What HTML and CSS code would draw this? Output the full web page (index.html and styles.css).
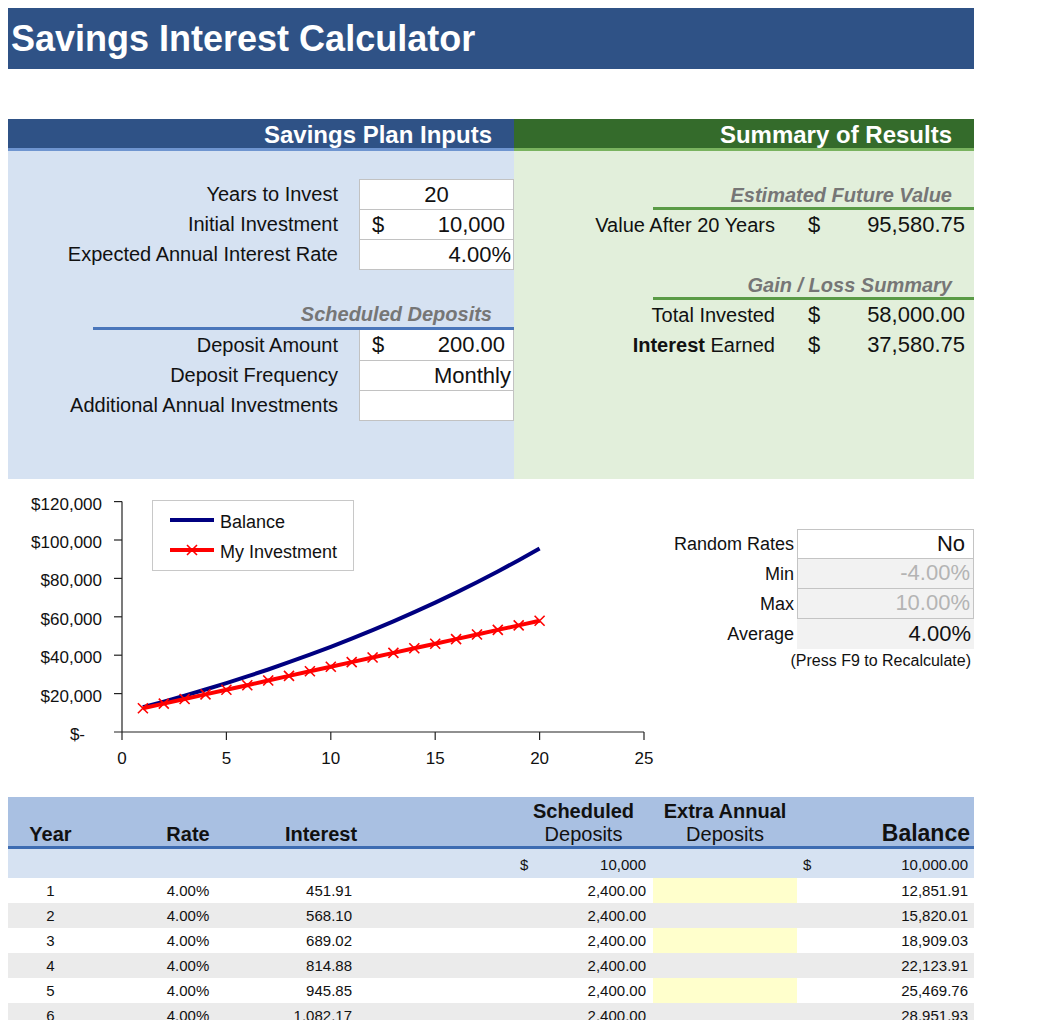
FILE: index.html
```html
<!DOCTYPE html>
<html lang="en">
<head>
  <meta charset="UTF-8" />
  <meta name="viewport" content="width=device-width, initial-scale=1.0" />
  <title>Savings Interest Calculator</title>
  <link rel="stylesheet" href="styles.css">
</head>
<body>
  <div class="page">
    <div class="title-bar">
      <h1>Savings Interest Calculator</h1>
    </div>

    <div class="plan">
      <div class="panel inputs">
        <h2 class="panel-head">Savings Plan Inputs</h2>
        <div class="panel-body">
          <div class="field-group">
            <div class="field-row">
              <span class="label">Years to Invest</span>
              <span class="field center">20</span>
            </div>
            <div class="field-row">
              <span class="label">Initial Investment</span>
              <span class="field money"><span>$</span><span>10,000</span></span>
            </div>
            <div class="field-row">
              <span class="label">Expected Annual Interest Rate</span>
              <span class="field right">4.00%</span>
            </div>
          </div>

          <h3 class="sub-head blue">Scheduled Deposits</h3>
          <div class="field-group">
            <div class="field-row">
              <span class="label">Deposit Amount</span>
              <span class="field money"><span>$</span><span>200.00</span></span>
            </div>
            <div class="field-row">
              <span class="label">Deposit Frequency</span>
              <span class="field right">Monthly</span>
            </div>
            <div class="field-row">
              <span class="label">Additional Annual Investments</span>
              <span class="field"></span>
            </div>
          </div>
        </div>
      </div>

      <div class="panel results">
        <h2 class="panel-head">Summary of Results</h2>
        <div class="panel-body">
          <h3 class="sub-head green">Estimated Future Value</h3>
          <div class="result-row">
            <span class="label">Value After 20 Years</span>
            <span class="amount"><span>$</span><span>95,580.75</span></span>
          </div>

          <h3 class="sub-head green">Gain / Loss Summary</h3>
          <div class="result-row">
            <span class="label">Total Invested</span>
            <span class="amount"><span>$</span><span>58,000.00</span></span>
          </div>
          <div class="result-row">
            <span class="label"><b>Interest</b> Earned</span>
            <span class="amount"><span>$</span><span>37,580.75</span></span>
          </div>
        </div>
      </div>
    </div>

    <div class="chart-area">
      <svg class="chart" width="652" height="300" viewBox="0 0 652 300">
        <defs>
          <marker id="cross" markerUnits="userSpaceOnUse" viewBox="0 0 12 12" refX="6" refY="6" markerWidth="12" markerHeight="12">
            <path d="M1 1 L11 11 M1 11 L11 1" stroke="#ff0000" stroke-width="1.6" fill="none" />
          </marker>
        </defs>

        <!-- axes -->
        <g class="axis">
          <line x1="114" y1="22.6" x2="114" y2="253" />
          <line x1="106" y1="253" x2="636" y2="253" />
          <line x1="106" y1="22.6" x2="114" y2="22.6" />
          <line x1="106" y1="61" x2="114" y2="61" />
          <line x1="106" y1="99.4" x2="114" y2="99.4" />
          <line x1="106" y1="137.8" x2="114" y2="137.8" />
          <line x1="106" y1="176.2" x2="114" y2="176.2" />
          <line x1="106" y1="214.6" x2="114" y2="214.6" />
          <line x1="114" y1="253" x2="114" y2="261" />
          <line x1="218.4" y1="253" x2="218.4" y2="261" />
          <line x1="322.8" y1="253" x2="322.8" y2="261" />
          <line x1="427.2" y1="253" x2="427.2" y2="261" />
          <line x1="531.6" y1="253" x2="531.6" y2="261" />
          <line x1="636" y1="253" x2="636" y2="261" />
        </g>

        <g class="ylabels">
          <text x="94" y="25">$120,000</text>
          <text x="94" y="63.4">$100,000</text>
          <text x="94" y="101.8">$80,000</text>
          <text x="94" y="140.2">$60,000</text>
          <text x="94" y="178.6">$40,000</text>
          <text x="94" y="217">$20,000</text>
          <text x="77" y="255.4">$-</text>
        </g>

        <g class="xlabels">
          <text x="114" y="279">0</text>
          <text x="218.4" y="279">5</text>
          <text x="322.8" y="279">10</text>
          <text x="427.2" y="279">15</text>
          <text x="531.6" y="279">20</text>
          <text x="636" y="279">25</text>
        </g>

        <polyline class="balance-line" points="134.9,228.3 155.8,222.6 176.6,216.7 197.5,210.5 218.4,204.1 239.3,197.4 260.2,190.5 281,183.2 301.9,175.7 322.8,167.8 343.7,159.7 364.6,151.2 385.4,142.3 406.3,133.1 427.2,123.6 448.1,113.6 469,103.2 489.8,92.4 510.7,81.2 531.6,69.5" />
        <polyline class="invest-line" points="134.9,229.2 155.8,224.6 176.6,220 197.5,215.4 218.4,210.8 239.3,206.2 260.2,201.5 281,196.9 301.9,192.3 322.8,187.7 343.7,183.1 364.6,178.5 385.4,173.9 406.3,169.3 427.2,164.7 448.1,160.1 469,155.5 489.8,150.9 510.7,146.4 531.6,141.8" />

        <!-- legend -->
        <rect class="legend-box" x="144.5" y="21.5" width="201" height="70" />
        <line class="balance-line" x1="162" y1="41" x2="206" y2="41" />
        <polyline class="invest-line" points="162,71 184,71 206,71" />
        <text class="legend-text" x="212" y="43">Balance</text>
        <text class="legend-text" x="212" y="73">My Investment</text>
      </svg>

      <div class="random">
        <div class="random-row">
          <span class="label">Random Rates</span>
          <span class="cell white pad">No</span>
        </div>
        <div class="random-row">
          <span class="label">Min</span>
          <span class="cell muted">-4.00%</span>
        </div>
        <div class="random-row">
          <span class="label">Max</span>
          <span class="cell muted">10.00%</span>
        </div>
        <div class="random-row">
          <span class="label">Average</span>
          <span class="cell plain">4.00%</span>
        </div>
        <p class="note">(Press F9 to Recalculate)</p>
      </div>
    </div>

    <table class="schedule">
      <colgroup>
        <col style="width:85px">
        <col style="width:190px">
        <col style="width:76px">
        <col style="width:155px">
        <col style="width:139px">
        <col style="width:144px">
        <col style="width:177px">
      </colgroup>
      <thead>
        <tr>
          <th>Year</th>
          <th>Rate</th>
          <th>Interest</th>
          <th></th>
          <th>Scheduled<br><span class="thin">Deposits</span></th>
          <th>Extra Annual<br><span class="thin">Deposits</span></th>
          <th class="balance-head">Balance</th>
        </tr>
      </thead>
      <tbody>
        <tr class="start">
          <td></td>
          <td></td>
          <td></td>
          <td></td>
          <td class="num sched"><span class="cur">$</span>10,000</td>
          <td></td>
          <td class="num bal"><span class="cur">$</span>10,000.00</td>
        </tr>
        <tr>
          <td class="mid">1</td><td class="mid">4.00%</td><td class="num">451.91</td><td></td>
          <td class="num">2,400.00</td><td class="extra"></td><td class="num bal">12,851.91</td>
        </tr>
        <tr class="alt">
          <td class="mid">2</td><td class="mid">4.00%</td><td class="num">568.10</td><td></td>
          <td class="num">2,400.00</td><td></td><td class="num bal">15,820.01</td>
        </tr>
        <tr>
          <td class="mid">3</td><td class="mid">4.00%</td><td class="num">689.02</td><td></td>
          <td class="num">2,400.00</td><td class="extra"></td><td class="num bal">18,909.03</td>
        </tr>
        <tr class="alt">
          <td class="mid">4</td><td class="mid">4.00%</td><td class="num">814.88</td><td></td>
          <td class="num">2,400.00</td><td></td><td class="num bal">22,123.91</td>
        </tr>
        <tr>
          <td class="mid">5</td><td class="mid">4.00%</td><td class="num">945.85</td><td></td>
          <td class="num">2,400.00</td><td class="extra"></td><td class="num bal">25,469.76</td>
        </tr>
        <tr class="alt">
          <td class="mid">6</td><td class="mid">4.00%</td><td class="num">1,082.17</td><td></td>
          <td class="num">2,400.00</td><td></td><td class="num bal">28,951.93</td>
        </tr>
      </tbody>
    </table>
  </div>
</body>
</html>
```

FILE: styles.css
```css
body {
  margin: 8px;
  font-family: "Liberation Sans", Arial, sans-serif;
  color: #111;
  background: #fff;
}
.page {
  width: 966px;
}
.title-bar {
  background-color: #2f5286;
  height: 61px;
  display: flex;
  align-items: center;
  padding-left: 3px;
}
.title-bar h1 {
  margin: 0;
  color: #fff;
  font-size: 36px;
  font-weight: bold;
}

/* savings plan + summary */
.plan {
  margin-top: 50px;
  display: grid;
  grid-template-columns: 506px 460px;
}
.panel {
  min-height: 360px;
  display: flex;
  flex-direction: column;
}
.panel-head {
  margin: 0;
  height: 29px;
  line-height: 31px;
  padding-right: 22px;
  text-align: right;
  color: #fff;
  font-size: 24px;
  font-weight: bold;
}
.inputs .panel-head {
  background-color: #2f5286;
  border-bottom: 3px solid #6f95d0;
}
.results .panel-head {
  background-color: #346b2b;
  border-bottom: 3px solid #79b35f;
}
.panel-body {
  flex: 1;
}
.inputs .panel-body {
  background-color: #d6e2f2;
  padding-top: 28px;
}
.results .panel-body {
  background-color: #e2efdb;
}

.field-row {
  display: grid;
  grid-template-columns: 351px 155px;
  height: 30px;
  font-size: 20px;
}
.field-row .label {
  text-align: right;
  padding-right: 21px;
  line-height: 31px;
}
.field {
  box-sizing: border-box;
  height: 30px;
  line-height: 30px;
  background: #fff;
  border: 1px solid #c2c2c2;
  border-bottom: none;
  font-size: 22px;
}
.field-group .field-row:last-child .field {
  border-bottom: 1px solid #c2c2c2;
  height: 31px;
}
.sub-head + .field-group .field-row:first-child .field {
  border-top: none;
}
.field.center {
  text-align: center;
}
.field.right {
  text-align: right;
  padding-right: 2px;
}
.field.money {
  display: flex;
  justify-content: space-between;
  padding: 0 8px 0 12px;
}

.sub-head {
  margin: 0;
  font-size: 20px;
  font-style: italic;
  font-weight: bold;
  color: #767676;
  text-align: right;
  padding-right: 22px;
  line-height: 24px;
}
.sub-head.blue {
  margin: 33px 0 0 85px;
  padding-bottom: 1px;
  border-bottom: 3px solid #4a76bb;
}
.sub-head.green {
  margin: 32px 0 0 139px;
  border-bottom: 3px solid #5a9b46;
}
.sub-head.green + .result-row + .sub-head.green {
  margin-top: 33px;
}

.result-row {
  display: grid;
  grid-template-columns: 283px 177px;
  height: 30px;
  line-height: 30px;
}
.result-row .label {
  text-align: right;
  padding-right: 22px;
  font-size: 20px;
}
.result-row .amount {
  display: flex;
  justify-content: space-between;
  padding: 0 9px 0 11px;
  font-size: 22px;
}

/* chart and random rates */
.chart-area {
  display: flex;
  height: 300px;
}
.chart {
  display: block;
  flex: none;
}
.chart .axis line {
  stroke: #222;
  stroke-width: 1.2;
}
.chart text {
  font-family: "Liberation Sans", Arial, sans-serif;
  font-size: 17px;
  fill: #111;
  dominant-baseline: central;
}
.chart .ylabels text {
  text-anchor: end;
}
.chart .xlabels text {
  text-anchor: middle;
}
.chart .legend-text {
  font-size: 18px;
}
.legend-box {
  fill: #fff;
  stroke: #c8c8c8;
  stroke-width: 1;
}
.balance-line {
  fill: none;
  stroke: #000080;
  stroke-width: 4;
}
.invest-line {
  fill: none;
  stroke: #ff0000;
  stroke-width: 4;
  marker-start: url(#cross);
  marker-mid: url(#cross);
  marker-end: url(#cross);
}
.legend-box + .balance-line + .invest-line {
  marker-start: none;
  marker-end: none;
}

.random {
  width: 314px;
  margin-top: 50px;
}
.random-row {
  display: grid;
  grid-template-columns: 137px 177px;
  height: 30px;
}
.random-row .label {
  text-align: right;
  padding-right: 3px;
  font-size: 18px;
  line-height: 30px;
}
.random .cell {
  box-sizing: border-box;
  text-align: right;
  padding-right: 3px;
  font-size: 22px;
  line-height: 28px;
}
.cell.white {
  background: #fff;
  border: 1px solid #c4c4c4;
}
.cell.pad {
  padding-right: 8px;
}
.cell.muted {
  background: #f2f2f2;
  border: 1px solid #c4c4c4;
  border-top: none;
  color: #b4b4b4;
}
.cell.plain {
  background: #f2f2f2;
  line-height: 30px;
}
.note {
  margin: 0;
  text-align: right;
  padding-right: 3px;
  font-size: 16px;
  line-height: 24px;
}

/* yearly schedule */
.schedule {
  margin-top: 18px;
  width: 966px;
  table-layout: fixed;
  border-collapse: collapse;
  border-spacing: 0;
}
.schedule th {
  background-color: #a9c0e2;
  border-bottom: 3px solid #3d6cb2;
  height: 49px;
  padding: 0;
  vertical-align: bottom;
  font-size: 20px;
  font-weight: bold;
  line-height: 23px;
  text-align: center;
}
.schedule th .thin {
  font-weight: normal;
}
.schedule th.balance-head {
  text-align: right;
  padding-right: 4px;
  font-size: 23px;
  line-height: 25px;
}
.schedule td {
  height: 25px;
  padding: 0;
  font-size: 15px;
}
.schedule tr.start td {
  height: 27px;
  padding-top: 2px;
  background-color: #d6e2f2;
}
.schedule tr.alt td {
  background-color: #ebebeb;
}
.schedule td.mid {
  text-align: center;
}
.schedule td.num {
  text-align: right;
  padding-right: 7px;
}
.schedule td.bal {
  padding-right: 6px;
}
.schedule td .cur {
  float: left;
  padding-left: 6px;
}
.schedule td.extra {
  background-color: #ffffcc;
}
```
